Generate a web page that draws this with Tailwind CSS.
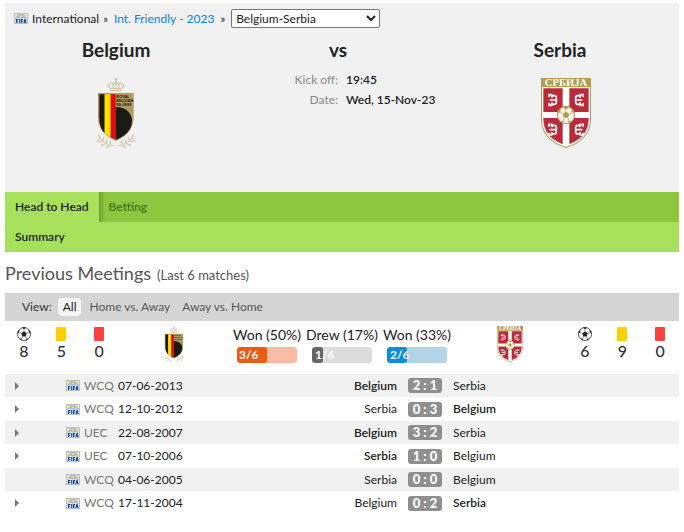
<!DOCTYPE html>
<html lang="en">

    <head>
        <title>Belgium vs Serbia - Head to Head</title>
        <meta charset="utf-8">
        <meta name="viewport" content="width=device-width, initial-scale=1">
        <script src="https://cdn.jsdelivr.net/npm/@tailwindcss/browser@4"></script>
    </head>

    <body class="bg-white px-[5px] pt-[3px] font-[Lato,sans-serif] text-xs leading-4 text-[#222]">
        <!-- Shared icons -->
        <svg class="hidden">
            <symbol id="fifa" viewBox="0 0 14 11">
                <rect width="14" height="11" fill="#b9bfca" />
                <rect x="1" y="1" width="12" height="9" fill="#dfe5ee" />
                <circle cx="4.500" cy="2.800" r="1.900" fill="#f2c75c" />
                <circle cx="9.500" cy="2.800" r="1.900" fill="#f2c75c" />
                <path d="M1.500 5.500l2.500-2 3 1.500 3-1.500 2.500 2M5 2h4" fill="none" stroke="#8fa8d4" />
                <path d="M2.500 10V6.500h2M2.500 8.200h1.700M5.700 6v4M7.500 10V6.500h1.700M7.500 8.200H9M10 10l1-4 1 4M10.500 9h1" fill="none" stroke="#1d4b9c" stroke-width="1.100" />
            </symbol>
            <symbol id="ball" viewBox="0 0 14 14">
                <circle cx="7" cy="7" r="6.500" fill="#fff" stroke="#333" stroke-width=".8" />
                <path d="M7 4.300l2.700 2-1 3.100H5.300l-1-3.100zM4.800.8L7 2.200 9.200.8 7 .3zM.5 6.700l1.700-1.500.3-2.700L.8 4.500zM13.500 6.700l-1.700-1.500-.3-2.700 1.700 2zM2.400 11.500l2.400.3.600 1.600zM11.600 11.500l-2.400.3-.6 1.600z" fill="#222" />
                <path d="M7 2.200v2.100M2.200 5.200l2.100 1.100M11.800 5.200L9.700 6.300M4.800 11.800l.5-2.400M9.200 11.800l-.5-2.400" stroke="#555" stroke-width=".6" />
            </symbol>
            <symbol id="belgium" viewBox="0 0 108 210">
                <g fill="none" stroke="#c4ae7c" stroke-width="2.500">
                    <path d="M54 0v12M49 5h10M37 38h34M37 32h34M37 32q-10-14 0-17 8-1 9 6M71 32q10-14 0-17-8-1-9 6M46 30q-3-16 8-18 11 2 8 18M54 13v17" />
                </g>
                <path d="M0 45h107v72c0 37-22 58-53 72C22 175 0 154 0 117z" fill="#b39a5e" />
                <path d="M4 49h16v117C9 154 4 140 4 117z" fill="#1b1a18" />
                <path d="M20 49h18v129q-10-5-18-12z" fill="#ffdf00" />
                <path d="M38 49h15v135q-8-2-15-6z" fill="#e30613" />
                <path d="M53 87c30 0 49 18 49 42 0 29-23 47-49 56z" fill="#1b1a18" />
                <g font-family="Lato, sans-serif" font-size="12" font-weight="900" fill="#1b1a18">
                    <text x="55" y="60">ROYAL</text>
                    <text x="55" y="72">BELGIAN</text>
                    <text x="55" y="84">FA·1895</text>
                </g>
                <g fill="none" stroke="#d2c4a0" stroke-width="4">
                    <path d="M2 174q15 26 46 30M106 174q-15 26-46 30" stroke-width="2" />
                    <path d="M6 184l-3-14M12 192l-13-5M13 190l5-13M22 198l-13 4M24 197l3-13M34 202l-9 6M36 201l1-12M102 184l3-14M96 192l13-5M95 190l-5-13M86 198l13 4M84 197l-3-13M74 202l9 6M72 201l-1-12" />
                </g>
            </symbol>
            <symbol id="serbia" viewBox="0 0 150 210">
                <path d="M0 0h150v120c0 50-30 76-75 90C30 196 0 170 0 120z" fill="#b59a55" />
                <path d="M3 27h144v93c0 48-28 73-72 87C31 193 3 168 3 120z" fill="#fff" />
                <path d="M7 31h136v89c0 45-27 69-68 82C34 189 7 165 7 120z" fill="#b92b3b" />
                <path d="M65 29h20v173l-10 4-10-4zM5 102h140v18H5z" fill="#fff" />
                <text x="75" y="23" text-anchor="middle" font-family="Liberation Serif, serif" font-size="32" font-weight="700" fill="#fff">СРБИЈА</text>
                <g fill="none" stroke="#fff" stroke-width="5">
                    <path id="ocilo" d="M24 57v-7h8v3h7q7 0 7 6v14q0 6-7 6h-7v3h-8v-7M26 66h18M33 53v6M33 73v6" />
                    <use href="#ocilo" transform="translate(150 0) scale(-1 1)" />
                    <use href="#ocilo" y="89" />
                    <use href="#ocilo" transform="translate(150 89) scale(-1 1)" />
                </g>
                <circle cx="75" cy="111" r="26" fill="#f8f3e6" stroke="#b59a55" stroke-width="3" />
                <path d="M75 101l10 7-4 11H69l-4-11zM63 88l12 6 12-6-12-3zM50 107l8-5 1-10-7 8zM100 107l-8-5-1-10 7 8zM57 128l10 2 1 6zM93 128l-10 2-1 6z" fill="#b59a55" />
                <path d="M75 94v7M58 102l7 6M92 102l-7 6M67 130l2-10M83 130l-2-10" stroke="#b59a55" stroke-width="2" />
            </symbol>
        </svg>

        <header class="bg-[#f1f1f1] pb-11">
            <nav class="flex items-center pt-1.5 pl-[9px]">
                <svg class="mr-1 h-[11px] w-3.5"><use href="#fifa" /></svg>
                <span>International</span>
                <span class="mx-1 text-[11px]">»</span>
                <a href="#" class="ml-0.5 text-[#0a84e0]">Int. Friendly - 2023</a>
                <label for="match" class="mx-1.5 text-[11px]" aria-label="Match">»</label>
                <select id="match" class="h-[19px] w-[149px] rounded-xs border border-[#767676] bg-white text-xs">
                    <option>Belgium-Serbia</option>
                </select>
            </nav>
            <div class="grid grid-cols-3 pt-2.5 pr-2 text-center">
                <div>
                    <h2 class="text-[19px] leading-6 font-bold">Belgium</h2>
                    <svg class="mx-auto mt-4 h-[70px] w-[50px]"><use href="#belgium" /></svg>
                </div>
                <div>
                    <h2 class="text-[19px] leading-6 font-bold">vs</h2>
                    <dl class="mt-2 grid grid-cols-2 gap-x-2 pl-2 leading-5">
                        <dt class="text-right text-[#888]">Kick off:</dt>
                        <dd class="text-left font-semibold whitespace-nowrap">19:45</dd>
                        <dt class="text-right text-[#888]">Date:</dt>
                        <dd class="text-left font-semibold whitespace-nowrap">Wed, 15-Nov-23</dd>
                    </dl>
                </div>
                <div>
                    <h2 class="text-[19px] leading-6 font-bold">Serbia</h2>
                    <div class="mt-4 pl-3"><svg class="mx-auto h-[70px] w-[50px]"><use href="#serbia" /></svg></div>
                </div>
            </div>
        </header>

        <nav class="bg-[#a7e15c] font-semibold">
            <div class="flex h-[30px] bg-[#8dc63f]">
                <a href="#" class="flex items-center bg-[#a7e15c] px-2.5">Head to Head</a>
                <a href="#" class="flex items-center bg-linear-to-r from-[#6fa02c] to-[#8dc63f] to-10% px-2.5 text-[#3f7410]">Betting</a>
            </div>
            <div class="flex h-[30px]">
                <a href="#" class="flex items-center px-2.5">Summary</a>
            </div>
        </nav>

        <main>
            <h2 class="flex items-baseline gap-1.5 pt-[9px] pb-1.5 text-lg leading-6 text-[#555]">Previous Meetings <span class="text-[13px]">(Last 6 matches)</span></h2>

            <div class="flex h-7 items-center bg-[#d5d5d5] pl-[17px] text-[#555]">
                <span class="mr-1.5 text-[#333]">View:</span>
                <button class="rounded-sm bg-[#f5f5f5] px-[5px] py-px text-[#222]">All</button>
                <button class="ml-2">Home vs. Away</button>
                <button class="ml-3">Away vs. Home</button>
            </div>

            <section class="flex h-[53px] pt-[5px]">
                <div class="grid w-[113px] grid-cols-3 text-center text-base leading-5 font-medium text-[#333]">
                    <div><svg class="mx-auto mt-px h-3.5 w-3.5"><use href="#ball" /></svg>8</div>
                    <div><i class="mx-auto mt-px block h-3.5 w-2.5 rounded-[1px] bg-[#ffd000]"></i>5</div>
                    <div><i class="mx-auto mt-px block h-3.5 w-2.5 rounded-[1px] bg-[#ff4040]"></i>0</div>
                </div>
                <div class="flex-1"><svg class="mx-auto h-9 w-7"><use href="#belgium" /></svg></div>
                <div class="grid w-[225px] grid-cols-3 text-center text-sm leading-[18px] whitespace-nowrap">
                    <div>Won (50%)
                        <div class="mx-auto mt-[3px] h-4 w-[60px] overflow-hidden rounded-[3px] bg-[#f8bba3] text-left">
                            <div class="h-4 rounded-[3px] bg-[#ec5b13] pl-0.5 text-xs leading-4 font-bold text-white" style="width: 50%">3/6</div>
                        </div>
                    </div>
                    <div>Drew (17%)
                        <div class="mx-auto mt-[3px] h-4 w-[60px] overflow-hidden rounded-[3px] bg-[#dcdcdc] text-left">
                            <div class="h-4 rounded-[3px] bg-[#666] pl-[3px] text-xs leading-4 font-bold text-white" style="width: 18%">1/6</div>
                        </div>
                    </div>
                    <div>Won (33%)
                        <div class="mx-auto mt-[3px] h-4 w-[60px] overflow-hidden rounded-[3px] bg-[#b3d3e6] text-left">
                            <div class="h-4 rounded-[3px] bg-[#0a8ce0] pl-[3px] text-xs leading-4 font-bold text-white" style="width: 33%">2/6</div>
                        </div>
                    </div>
                </div>
                <div class="flex-1"><svg class="mx-auto h-9 w-7"><use href="#serbia" /></svg></div>
                <div class="grid w-[113px] grid-cols-3 text-center text-base leading-5 font-medium text-[#333]">
                    <div><svg class="mx-auto mt-px h-3.5 w-3.5"><use href="#ball" /></svg>6</div>
                    <div><i class="mx-auto mt-px block h-3.5 w-2.5 rounded-[1px] bg-[#ffd000]"></i>9</div>
                    <div><i class="mx-auto mt-px block h-3.5 w-2.5 rounded-[1px] bg-[#ff4040]"></i>0</div>
                </div>
            </section>

            <table class="w-full table-fixed">
                <colgroup>
                    <col class="w-[61px]">
                    <col class="w-[18px]">
                    <col class="w-[34px]">
                    <col class="w-[84px]">
                    <col>
                    <col class="w-14">
                    <col class="w-[226px]">
                </colgroup>
                <tbody>
                    <tr class="h-[23px] bg-[#f1f1f1]">
                        <td class="pl-2.5"><button class="block" aria-label="Expand"><svg class="h-2 w-1" viewBox="0 0 4 8"><path d="M0 0l4 4-4 4z" fill="#777" /></svg></button></td>
                        <td><svg class="h-[11px] w-3.5"><use href="#fifa" /></svg></td>
                        <td class="text-[#777]">WCQ</td>
                        <td>07-06-2013</td>
                        <td class="text-right font-semibold">Belgium</td>
                        <td><span class="mx-auto block h-[15px] w-[34px] rounded-[3px] bg-[#8f8f8f] text-center text-[13px] leading-[15px] font-black whitespace-nowrap text-white">2 : 1</span></td>
                        <td>Serbia</td>
                    </tr>
                    <tr class="h-6">
                        <td class="pl-2.5"><button class="block" aria-label="Expand"><svg class="h-2 w-1" viewBox="0 0 4 8"><path d="M0 0l4 4-4 4z" fill="#777" /></svg></button></td>
                        <td><svg class="h-[11px] w-3.5"><use href="#fifa" /></svg></td>
                        <td class="text-[#777]">WCQ</td>
                        <td>12-10-2012</td>
                        <td class="text-right">Serbia</td>
                        <td><span class="mx-auto block h-[15px] w-[34px] rounded-[3px] bg-[#8f8f8f] text-center text-[13px] leading-[15px] font-black whitespace-nowrap text-white">0 : 3</span></td>
                        <td class="font-semibold">Belgium</td>
                    </tr>
                    <tr class="h-[23px] bg-[#f1f1f1]">
                        <td class="pl-2.5"><button class="block" aria-label="Expand"><svg class="h-2 w-1" viewBox="0 0 4 8"><path d="M0 0l4 4-4 4z" fill="#777" /></svg></button></td>
                        <td><svg class="h-[11px] w-3.5"><use href="#fifa" /></svg></td>
                        <td class="text-[#777]">UEC</td>
                        <td>22-08-2007</td>
                        <td class="text-right font-semibold">Belgium</td>
                        <td><span class="mx-auto block h-[15px] w-[34px] rounded-[3px] bg-[#8f8f8f] text-center text-[13px] leading-[15px] font-black whitespace-nowrap text-white">3 : 2</span></td>
                        <td>Serbia</td>
                    </tr>
                    <tr class="h-6">
                        <td class="pl-2.5"><button class="block" aria-label="Expand"><svg class="h-2 w-1" viewBox="0 0 4 8"><path d="M0 0l4 4-4 4z" fill="#777" /></svg></button></td>
                        <td><svg class="h-[11px] w-3.5"><use href="#fifa" /></svg></td>
                        <td class="text-[#777]">UEC</td>
                        <td>07-10-2006</td>
                        <td class="text-right font-semibold">Serbia</td>
                        <td><span class="mx-auto block h-[15px] w-[34px] rounded-[3px] bg-[#8f8f8f] text-center text-[13px] leading-[15px] font-black whitespace-nowrap text-white">1 : 0</span></td>
                        <td>Belgium</td>
                    </tr>
                    <tr class="h-[23px] bg-[#f1f1f1]">
                        <td></td>
                        <td><svg class="h-[11px] w-3.5"><use href="#fifa" /></svg></td>
                        <td class="text-[#777]">WCQ</td>
                        <td>04-06-2005</td>
                        <td class="text-right">Serbia</td>
                        <td><span class="mx-auto block h-[15px] w-[34px] rounded-[3px] bg-[#8f8f8f] text-center text-[13px] leading-[15px] font-black whitespace-nowrap text-white">0 : 0</span></td>
                        <td>Belgium</td>
                    </tr>
                    <tr class="h-6">
                        <td class="pl-2.5"><button class="block" aria-label="Expand"><svg class="h-2 w-1" viewBox="0 0 4 8"><path d="M0 0l4 4-4 4z" fill="#777" /></svg></button></td>
                        <td><svg class="h-[11px] w-3.5"><use href="#fifa" /></svg></td>
                        <td class="text-[#777]">WCQ</td>
                        <td>17-11-2004</td>
                        <td class="text-right">Belgium</td>
                        <td><span class="mx-auto block h-[15px] w-[34px] rounded-[3px] bg-[#8f8f8f] text-center text-[13px] leading-[15px] font-black whitespace-nowrap text-white">0 : 2</span></td>
                        <td class="font-semibold">Serbia</td>
                    </tr>
                </tbody>
            </table>
        </main>
    </body>

</html>
